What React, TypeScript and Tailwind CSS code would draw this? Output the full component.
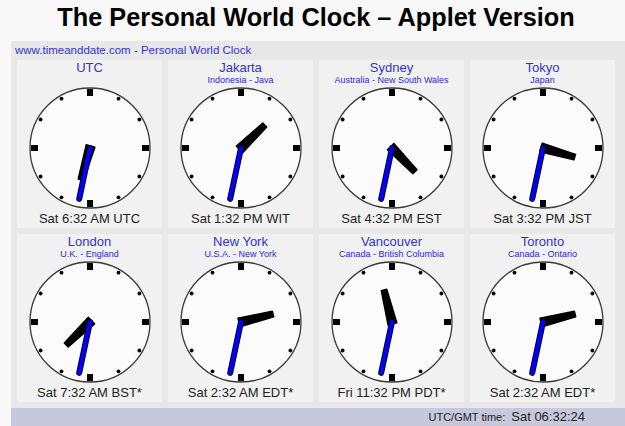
import React from "react";

type City = {
  name: string;
  region?: string;
  time: string;
  hour: number;
  minute: number;
};

const cities: City[] = [
  { name: "UTC", time: "Sat 6:32 AM UTC", hour: 6, minute: 32 },
  { name: "Jakarta", region: "Indonesia - Java", time: "Sat 1:32 PM WIT", hour: 1, minute: 32 },
  { name: "Sydney", region: "Australia - New South Wales", time: "Sat 4:32 PM EST", hour: 4, minute: 32 },
  { name: "Tokyo", region: "Japan", time: "Sat 3:32 PM JST", hour: 3, minute: 32 },
  { name: "London", region: "U.K. - England", time: "Sat 7:32 AM BST*", hour: 7, minute: 32 },
  { name: "New York", region: "U.S.A. - New York", time: "Sat 2:32 AM EDT*", hour: 2, minute: 32 },
  { name: "Vancouver", region: "Canada - British Columbia", time: "Fri 11:32 PM PDT*", hour: 11, minute: 32 },
  { name: "Toronto", region: "Canada - Ontario", time: "Sat 2:32 AM EDT*", hour: 2, minute: 32 },
];

const C = 62;
const R = 60;

function polar(deg: number, r: number) {
  const a = (deg * Math.PI) / 180;
  return { x: C + r * Math.sin(a), y: C - r * Math.cos(a) };
}

function Face({ hour, minute }: { hour: number; minute: number }) {
  const hAng = (hour % 12) * 30 + minute * 0.5;
  const mAng = minute * 6;

  // hour hand: tapered wedge, wide at the hub
  const ha = (hAng * Math.PI) / 180;
  const ux = Math.sin(ha);
  const uy = -Math.cos(ha);
  const px = -uy;
  const py = ux;
  const tail = -2;
  const len = 33;
  const hand = [
    [C + ux * tail + px * 4.5, C + uy * tail + py * 4.5],
    [C + ux * len + px * 2.8, C + uy * len + py * 2.8],
    [C + ux * len - px * 2.8, C + uy * len - py * 2.8],
    [C + ux * tail - px * 4.5, C + uy * tail - py * 4.5],
  ]
    .map((p) => p.join(","))
    .join(" ");

  const mTip = polar(mAng, 52);

  return (
    <svg width={124} height={124} viewBox="0 0 124 124">
      <circle cx={C} cy={C} r={R} fill="#fbfbfb" stroke="#3a3a3a" strokeWidth={1.3} />
      {Array.from({ length: 12 }).map((_, i) => {
        if (i % 3 === 0) {
          return (
            <rect
              key={i}
              x={C - 3}
              y={C - R + 1}
              width={6}
              height={7}
              fill="#000"
              transform={`rotate(${i * 30} ${C} ${C})`}
            />
          );
        }
        const p = polar(i * 30, 57);
        return <circle key={i} cx={p.x} cy={p.y} r={1.9} fill="#000" />;
      })}
      <polygon points={hand} fill="#000" stroke="#000" strokeWidth={1.5} strokeLinejoin="round" />
      <line x1={C} y1={C} x2={mTip.x} y2={mTip.y} stroke="#000" strokeWidth={6} strokeLinecap="round" />
      <line x1={C} y1={C} x2={mTip.x} y2={mTip.y} stroke="#0000ff" strokeWidth={4.2} strokeLinecap="round" />
    </svg>
  );
}

function ClockCell({ city }: { city: City }) {
  return (
    <div className="flex h-[168px] flex-col items-center bg-[#f1f1f1]">
      <div className="h-[15px] text-[13px] leading-[15px] text-[#3333cc]">{city.name}</div>
      <div className="h-[11px] whitespace-nowrap text-[9px] leading-[10px] text-[#2a2acc]">{city.region}</div>
      <Face hour={city.hour} minute={city.minute} />
      <div className="mt-px whitespace-nowrap text-[13px] leading-[15px] text-[#222]">{city.time}</div>
    </div>
  );
}

export default function App() {
  return (
    <div
      className="h-[426px] w-[625px] overflow-hidden bg-[#f8f8f8]"
      style={{ fontFamily: '"Liberation Sans", Arial, sans-serif' }}
    >
      <div className="h-[41px] pl-[7px] pt-[5px] text-center text-[25.3px] font-bold leading-[25px] text-black">
        The Personal World Clock – Applet Version
      </div>

      <div className="ml-[11px] flex h-[385px] flex-col bg-[#e8e8e8]">
        <div className="h-[19px] pl-[4px] pt-[3px] text-[11.5px] leading-[13px] text-[#3333cc]">
          www.timeanddate.com - Personal World Clock
        </div>
        <div className="grid w-[604px] grid-cols-4 gap-[6px] pl-[6px]">
          {cities.map((c) => (
            <ClockCell key={c.name} city={c} />
          ))}
        </div>
        <div className="mt-[6px] flex h-[18px] items-center justify-end gap-[6px] bg-[#c8c8dc] pr-[40px] text-[#222]">
          <span className="text-[11px]">UTC/GMT time:</span>
          <span className="text-[13px]">Sat 06:32:24</span>
        </div>
      </div>
    </div>
  );
}
